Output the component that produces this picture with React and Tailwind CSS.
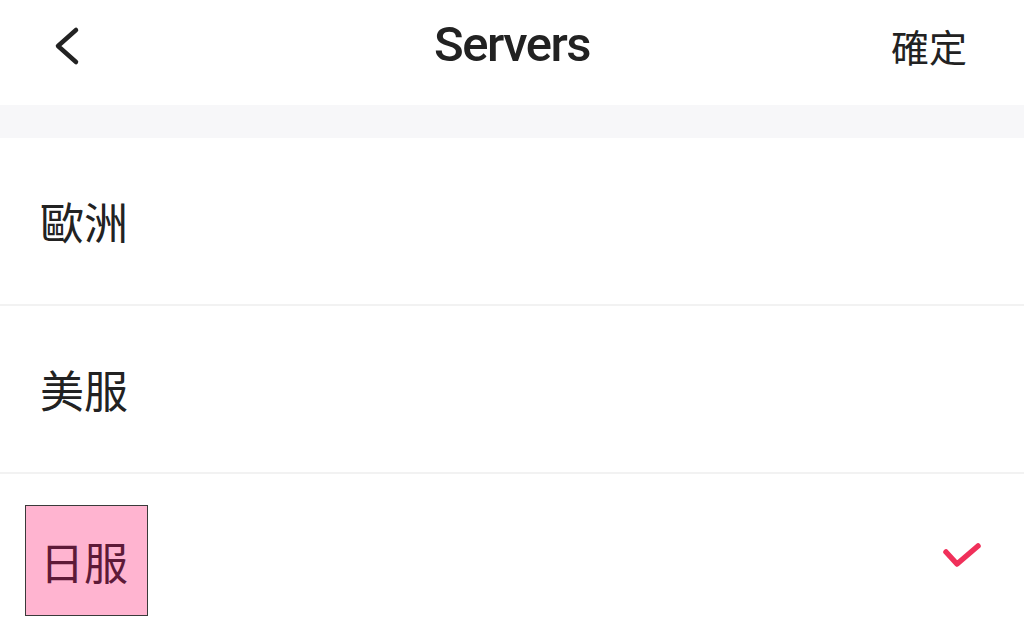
const cjk = { fontFamily: '"Noto Sans CJK TC", "Noto Sans CJK SC", sans-serif' }

const servers = [
  { name: '歐洲', selected: false },
  { name: '美服', selected: false },
  { name: '日服', selected: true },
]

function Row({ name, selected }) {
  return (
    <div className="flex h-[168px] items-center justify-between border-b-2 border-[#f2f2f2] pr-[42px]">
      {selected ? (
        <div className="ml-[25px] mt-[7px] border border-[#3a3a3a] bg-[#ffb4d0] pb-[32px] pl-[14px] pr-[19px] pt-[33px]">
          <span className="block text-[44px] leading-none text-[#5e1a38]" style={cjk}>{name}</span>
        </div>
      ) : (
        <span className="ml-[40px] text-[44px] leading-none text-[#222]" style={cjk}>{name}</span>
      )}
      {selected && (
        <svg width="40" height="32" viewBox="0 0 40 32" fill="none">
          <polyline points="4,11 15,23 36,5" stroke="#f0305a" strokeWidth="5.5" strokeLinecap="round" strokeLinejoin="round" />
        </svg>
      )}
    </div>
  )
}

export default function App() {
  return (
    <div className="h-[630px] w-[1024px] overflow-hidden bg-white">
      <div className="relative flex h-[105px] items-center justify-between pl-[52px] pr-[57px]">
        <svg width="30" height="40" viewBox="0 0 30 40" fill="none" className="-mt-[14px]">
          <polyline points="24,4 6,20 24,36" stroke="#222" strokeWidth="4.5" strokeLinecap="round" strokeLinejoin="round" />
        </svg>
        <h1
          className="absolute left-1/2 top-[45px] -translate-x-1/2 -translate-y-1/2 text-[49px] font-medium tracking-[-1.5px] text-[#222]"
          style={{ fontFamily: 'Roboto, sans-serif' }}
        >
          Servers
        </h1>
        <span className="-mt-[14px] text-[38px] leading-none text-[#222]" style={cjk}>確定</span>
      </div>
      <div className="h-[33px] bg-[#f7f7f9]" />
      {servers.map((s) => (
        <Row key={s.name} {...s} />
      ))}
    </div>
  )
}
